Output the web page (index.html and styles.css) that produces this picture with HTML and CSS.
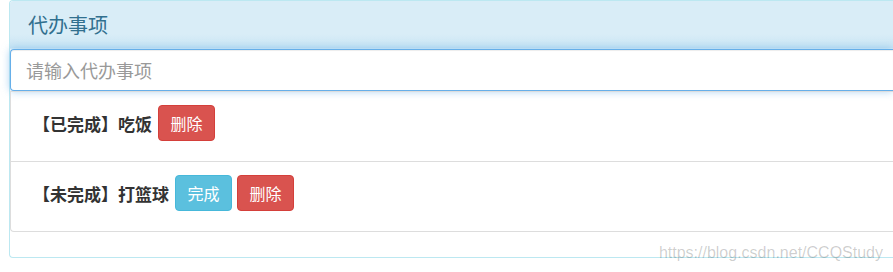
FILE: index.html
```html
<!DOCTYPE html>
<html lang="zh-CN">
<head>
    <meta charset="UTF-8">
    <meta name="viewport" content="width=device-width, initial-scale=1.0">
    <title>代办事项</title>
    <link rel="stylesheet" href="styles.css">
</head>
<body>
    <div class="page">
        <div class="panel panel-info">
            <div class="panel-heading">
                <h3 class="panel-title">代办事项</h3>
            </div>

            <input type="text" class="todo-input" placeholder="请输入代办事项">

            <ul class="list-group">
                <li class="list-group-item">
                    <span class="todo-text">【已完成】吃饭</span>
                    <button class="btn btn-danger">删除</button>
                </li>
                <li class="list-group-item">
                    <span class="todo-text">【未完成】打篮球</span>
                    <button class="btn btn-info">完成</button>
                    <button class="btn btn-danger">删除</button>
                </li>
            </ul>
        </div>

        <div class="watermark">https://blog.csdn.net/CCQStudy</div>
    </div>
</body>
</html>
```

FILE: styles.css
```css
* {
    box-sizing: border-box;
    margin: 0;
    padding: 0;
}

body {
    background-color: #fff;
    color: #333;
    font-family: "Noto Sans CJK SC", "Liberation Sans", sans-serif;
    font-size: 14px;
}

.page {
    position: relative;
    height: 272px;
    padding-left: 9px;
}

.panel {
    background-color: #fff;
    border: 1px solid #bce8f1;
    border-right: none;
    border-radius: 4px 0 0 4px;
}

.panel-heading {
    padding: 13px 18px 12px;
    background: linear-gradient(to bottom, #d9edf7 0, #d9edf7 70%, #c9e5f4 100%);
    border-bottom: 1px solid transparent;
    border-radius: 3px 0 0 0;
}

.panel-title {
    color: #31708f;
    font-size: 20px;
    font-weight: normal;
    line-height: 22px;
}

.todo-input {
    display: block;
    width: 100%;
    height: 42px;
    padding: 0 15px;
    font-family: inherit;
    font-size: 18px;
    color: #555;
    background-color: #fff;
    border: 1px solid #66afe9;
    border-right: none;
    border-radius: 4px 0 0 4px;
    outline: none;
    box-shadow: inset 0 1px 1px rgba(0, 0, 0, 0.075), 0 0 8px rgba(102, 175, 233, 0.6);
}

.todo-input::placeholder {
    color: #999;
}

.list-group {
    list-style: none;
    margin-bottom: 25px;
    border: 1px solid #ddd;
    border-right: none;
    border-radius: 0 0 0 4px;
}

.list-group-item {
    display: flex;
    align-items: center;
    gap: 5px;
    padding: 13px 22px 20px;
}

.list-group-item + .list-group-item {
    border-top: 1px solid #ddd;
}

.todo-text {
    font-size: 17px;
    font-weight: bold;
    color: #333;
    margin-right: 1px;
}

.btn {
    height: 36px;
    padding: 0 11.5px;
    font-family: inherit;
    font-size: 16px;
    line-height: 34px;
    color: #fff;
    border: 1px solid transparent;
    border-radius: 4px;
    cursor: pointer;
}

.btn-danger {
    background-color: #d9534f;
    border-color: #d43f3a;
}

.btn-info {
    background-color: #5bc0de;
    border-color: #46b8da;
}

.watermark {
    position: absolute;
    right: 10px;
    top: 244px;
    font-family: "Liberation Sans", Arial, sans-serif;
    font-size: 16px;
    line-height: 18px;
    color: rgba(0, 0, 0, 0.2);
}
```
